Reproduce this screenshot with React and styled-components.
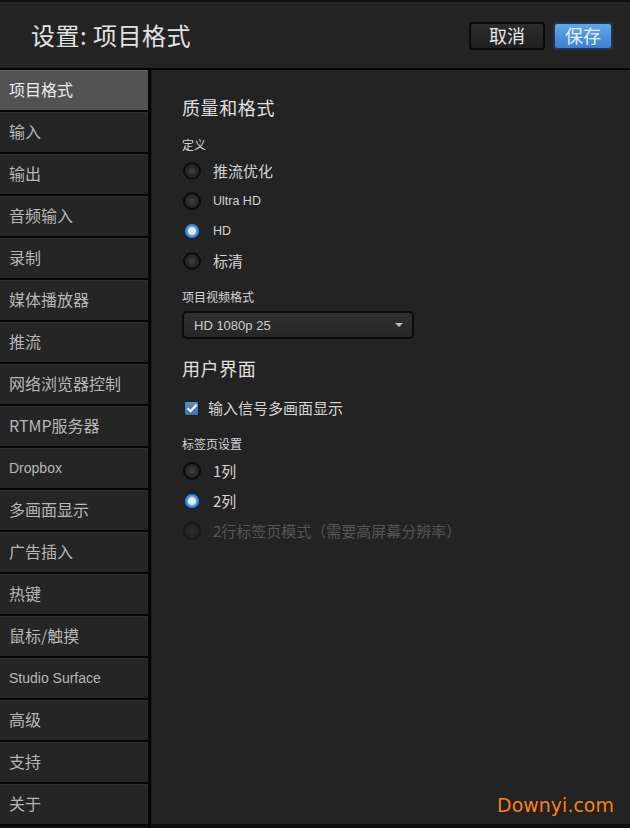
import React, { useState } from 'react';
import styled, { createGlobalStyle } from 'styled-components';

const GlobalStyle = createGlobalStyle`
  html, body {
    margin: 0;
    padding: 0;
    background: #101010;
  }
  body {
    font-family: "Noto Sans CJK SC", "Noto Sans", sans-serif;
  }
`;

const Window = styled.div`
  position: relative;
  width: 630px;
  height: 828px;
  display: flex;
  flex-direction: column;
  background: #101010;
  padding-top: 2px;
  box-sizing: border-box;
  overflow: hidden;
`;

const Header = styled.div`
  height: 66px;
  display: flex;
  align-items: center;
  justify-content: space-between;
  padding: 0 17px 0 31px;
  background: #232323;
  border-bottom: 2px solid #050505;
`;

const Title = styled.h1`
  margin: 0 0 2px;
  font-size: 24px;
  font-weight: 400;
  color: #e2e2e2;
  letter-spacing: 0.5px;
`;

const Actions = styled.div`
  display: flex;
  gap: 8px;
  margin-top: 2px;
`;

const Button = styled.button`
  height: 28px;
  width: ${p => p.$width}px;
  padding: 0 0 2px;
  border-radius: 4px;
  font-family: inherit;
  font-size: 18px;
  line-height: 1;
  cursor: pointer;
  border: 2px solid ${p => (p.$primary ? '#1b3552' : '#0a0a0a')};
  color: ${p => (p.$primary ? '#e4f1ff' : '#e6e6e6')};
  background: ${p =>
    p.$primary
      ? 'linear-gradient(#62a6ea, #3d80cf)'
      : 'linear-gradient(#2c2c2c, #202020)'};
`;

const Body = styled.div`
  flex: 1;
  display: flex;
  min-height: 0;
`;

const Sidebar = styled.nav`
  width: 148px;
  display: flex;
  flex-direction: column;
  border-right: 3px solid #060606;
`;

const NavItem = styled.div`
  height: 42px;
  flex: 0 0 42px;
  box-sizing: border-box;
  display: flex;
  align-items: center;
  padding: 0 0 ${p => (p.$latin ? 0 : 3)}px 9px;
  border-bottom: 2px solid #050505;
  box-shadow: inset 0 1px 0 ${p => (p.$active ? '#636363' : '#2d2d2d')};
  background: ${p => (p.$active ? '#525252' : '#252525')};
  color: ${p => (p.$active ? '#ececec' : '#b7b7b7')};
  font-size: ${p => (p.$latin ? '14px' : '16px')};
  font-family: ${p =>
    p.$latin ? '"Liberation Sans", Arial, sans-serif' : 'inherit'};
  cursor: pointer;
`;

const Content = styled.main`
  flex: 1;
  background: #232323;
  border-left: 1px solid #1a1a1a;
  padding: 26px 0 0 30px;
  margin-bottom: 4px;
  display: flex;
  flex-direction: column;
  align-items: flex-start;
`;

const SectionTitle = styled.h2`
  margin: ${p => p.$top || 0}px 0 0;
  height: 24px;
  line-height: 22px;
  font-size: 18px;
  font-weight: 400;
  color: #e0e0e0;
  letter-spacing: 0.6px;
`;

const FieldLabel = styled.div`
  margin-top: ${p => p.$top || 0}px;
  height: 16px;
  line-height: 16px;
  font-size: 12px;
  color: #d6d6d6;
`;

const OptionRow = styled.label`
  height: 30px;
  margin-top: ${p => p.$top || 0}px;
  display: flex;
  align-items: center;
  gap: ${p => p.$gap || 12}px;
  padding-left: 1px;
  cursor: ${p => (p.$disabled ? 'default' : 'pointer')};
`;

const RadioDot = styled.span`
  width: 18px;
  height: 18px;
  box-sizing: border-box;
  border-radius: 50%;
  display: flex;
  align-items: center;
  justify-content: center;
  opacity: ${p => (p.$disabled ? 0.35 : 1)};
  border: 2px solid ${p => (p.$checked ? '#15293f' : '#0b0b0b')};
  background: ${p =>
    p.$checked
      ? 'radial-gradient(circle, #d8f0ff 0 3px, #9fd0ff 4px, #4f8fd4 5px, #3a72b5 8px)'
      : 'radial-gradient(circle, #3a3a3a 0 2px, #2a2a2a 4px, #242424 8px)'};
`;

const OptionText = styled.span`
  font-size: ${p => (p.$latin ? '12.5px' : '15px')};
  font-family: ${p =>
    p.$latin ? '"Liberation Sans", Arial, sans-serif' : 'inherit'};
  color: ${p => (p.$disabled ? '#555555' : '#d4d4d4')};
  padding-bottom: ${p => (p.$latin ? 0 : 2)}px;
`;

const Select = styled.div`
  margin-top: 6px;
  width: 232px;
  height: 28px;
  box-sizing: border-box;
  border: 2px solid #0b0b0b;
  border-radius: 5px;
  background: linear-gradient(#303030, #262626);
  display: flex;
  align-items: center;
  justify-content: space-between;
  padding: 0 9px 0 10px;
  font-family: "Liberation Sans", Arial, sans-serif;
  font-size: 13px;
  color: #cfcfcf;
`;

const Caret = styled.span`
  width: 0;
  height: 0;
  border-left: 4px solid transparent;
  border-right: 4px solid transparent;
  border-top: 4px solid #bdbdbd;
`;

const CheckBox = styled.span`
  width: 17px;
  height: 17px;
  box-sizing: border-box;
  border-radius: 3px;
  border: 2px solid #142334;
  background: linear-gradient(#5d8fc4, #3f6fa3);
  display: flex;
  align-items: center;
  justify-content: center;
`;

const Watermark = styled.div`
  position: absolute;
  right: 16px;
  bottom: 12px;
  font-family: "DejaVu Sans", Verdana, sans-serif;
  font-size: 19px;
  color: #e8872c;
  text-shadow: 0 0 2px #3b1a00, 1px 1px 1px #3b1a00;
`;

const navItems = [
  '项目格式', '输入', '输出', '音频输入', '录制', '媒体播放器', '推流',
  '网络浏览器控制', 'RTMP服务器', 'Dropbox', '多画面显示', '广告插入',
  '热键', '鼠标/触摸', 'Studio Surface', '高级', '支持', '关于',
];

const definitions = [
  { label: '推流优化' },
  { label: 'Ultra HD', latin: true },
  { label: 'HD', latin: true },
  { label: '标清' },
];

const Radio = ({ checked, disabled, label, latin, onSelect, top }) => (
  <OptionRow $top={top} $disabled={disabled} onClick={disabled ? undefined : onSelect}>
    <RadioDot $checked={checked} $disabled={disabled} />
    <OptionText $latin={latin} $disabled={disabled}>{label}</OptionText>
  </OptionRow>
);

export default function App() {
  const [active, setActive] = useState(0);
  const [definition, setDefinition] = useState(2);
  const [columns, setColumns] = useState(1);
  const [multiview, setMultiview] = useState(true);

  return (
    <>
      <GlobalStyle />
      <Window>
        <Header>
          <Title>设置: 项目格式</Title>
          <Actions>
            <Button $width={76}>取消</Button>
            <Button $width={60} $primary>保存</Button>
          </Actions>
        </Header>
        <Body>
          <Sidebar>
            {navItems.map((item, i) => (
              <NavItem
                key={item}
                $active={i === active}
                $latin={/^[A-Za-z ]+$/.test(item)}
                onClick={() => setActive(i)}
              >
                {item}
              </NavItem>
            ))}
          </Sidebar>
          <Content>
            <SectionTitle>质量和格式</SectionTitle>
            <FieldLabel $top={17}>定义</FieldLabel>
            {definitions.map((d, i) => (
              <Radio
                key={d.label}
                top={i === 0 ? 3 : 0}
                label={d.label}
                latin={d.latin}
                checked={definition === i}
                onSelect={() => setDefinition(i)}
              />
            ))}
            <FieldLabel $top={13}>项目视频格式</FieldLabel>
            <Select>
              <span>HD 1080p 25</span>
              <Caret />
            </Select>
            <SectionTitle $top={18}>用户界面</SectionTitle>
            <OptionRow $top={12} $gap={8} onClick={() => setMultiview(!multiview)}>
              <CheckBox>
                {multiview && (
                  <svg width="12" height="10" viewBox="0 0 12 10">
                    <path d="M1.5 5.2 L4.6 8.2 L10.5 1.8" fill="none" stroke="#f2f7ff" strokeWidth="2.2" />
                  </svg>
                )}
              </CheckBox>
              <OptionText>输入信号多画面显示</OptionText>
            </OptionRow>
            <FieldLabel $top={13}>标签页设置</FieldLabel>
            <Radio top={4} label="1列" checked={columns === 0} onSelect={() => setColumns(0)} />
            <Radio label="2列" checked={columns === 1} onSelect={() => setColumns(1)} />
            <Radio label="2行标签页模式（需要高屏幕分辨率）" disabled />
          </Content>
        </Body>
        <Watermark>Downyi.com</Watermark>
      </Window>
    </>
  );
}
